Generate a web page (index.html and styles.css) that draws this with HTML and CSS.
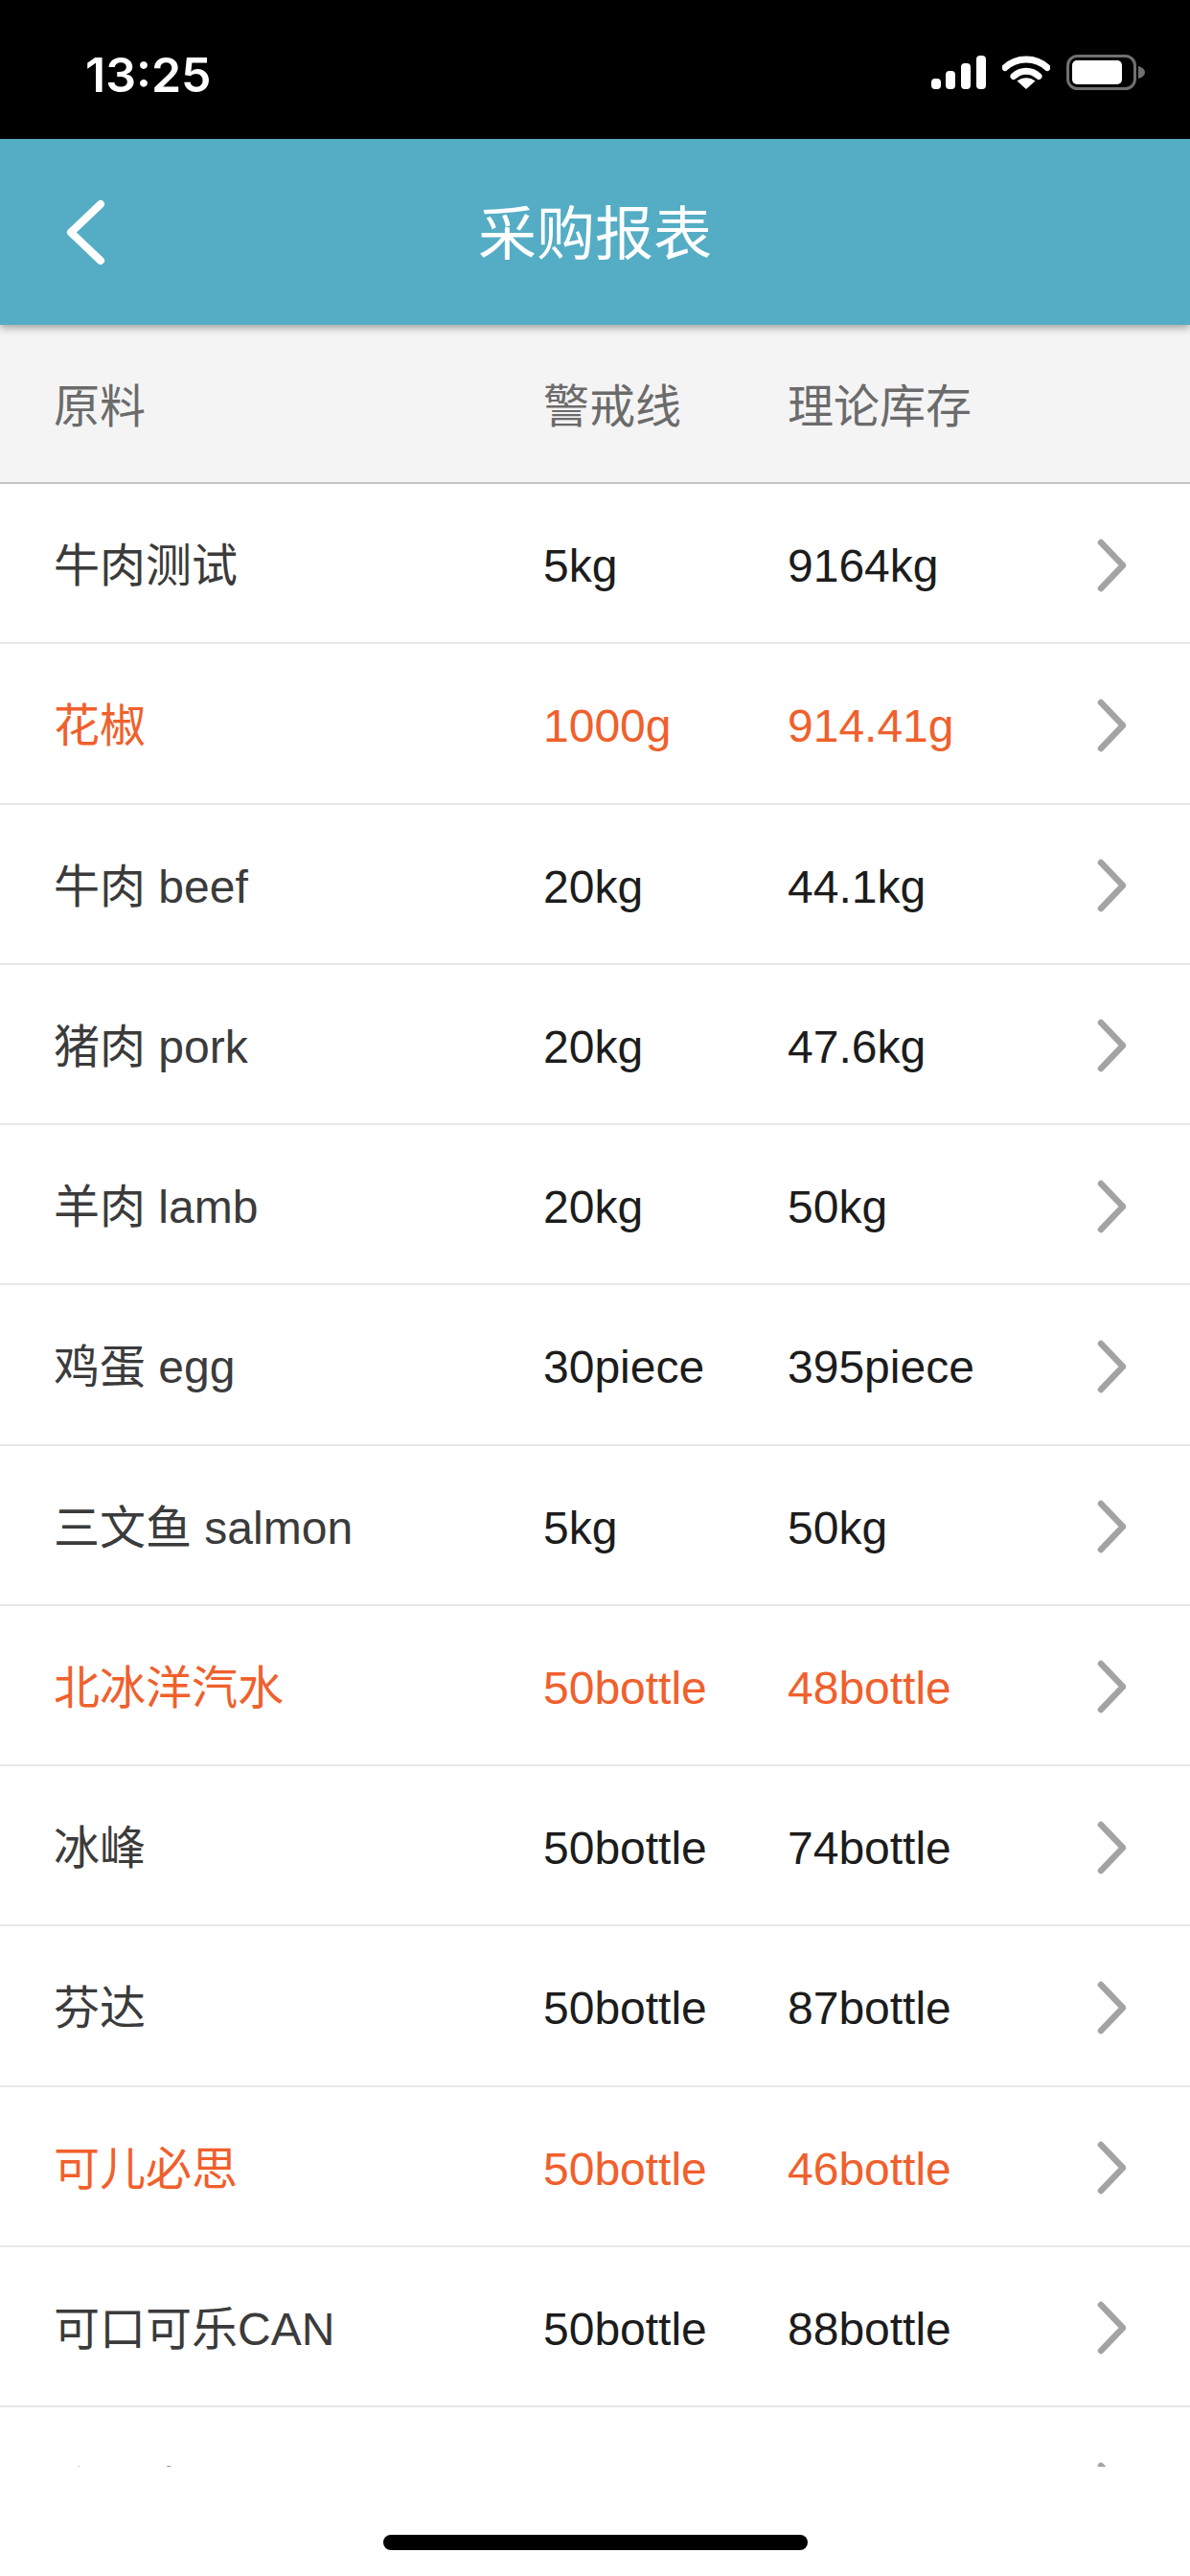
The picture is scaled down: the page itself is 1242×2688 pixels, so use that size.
FILE: index.html
```html
<!DOCTYPE html>
<html lang="zh">
<head>
  <meta charset="UTF-8">
  <title>采购报表</title>
  <link rel="stylesheet" href="styles.css">
</head>
<body>

  <!-- Status bar -->
  <div class="status-bar">
    <span class="time">13:25</span>
    <div class="status-icons">
      <svg class="signal" width="57" height="35" viewBox="0 0 57 35">
        <rect x="0" y="24" width="10" height="11" rx="4" fill="#fff"/>
        <rect x="15" y="16" width="10" height="19" rx="4" fill="#fff"/>
        <rect x="31" y="8" width="10" height="27" rx="4" fill="#fff"/>
        <rect x="47" y="0" width="10" height="35" rx="4" fill="#fff"/>
      </svg>
      <svg class="wifi" width="50" height="36" viewBox="0 0 50 36">
        <path d="M3 13.500C15 2 35 2 47 13.500" fill="none" stroke="#fff" stroke-width="7" stroke-linecap="round"/>
        <path d="M12 22.500C19.500 15.500 30.500 15.500 38 22.500" fill="none" stroke="#fff" stroke-width="7" stroke-linecap="round"/>
        <path d="M25 36L15.500 27.500C21 23 29 23 34.500 27.500Z" fill="#fff"/>
      </svg>
      <svg class="battery" width="82" height="37" viewBox="0 0 82 37">
        <rect x="1.500" y="1.500" width="70" height="34" rx="10" fill="none" stroke="#707070" stroke-width="3"/>
        <rect x="6" y="6" width="52" height="25" rx="5" fill="#fff"/>
        <path d="M75 12C79 13 82 15.500 82 18.500C82 21.500 79 24 75 25Z" fill="#707070"/>
      </svg>
    </div>
  </div>

  <!-- Header -->
  <div class="nav-bar">
    <svg class="back" width="41" height="69" viewBox="0 0 41 69">
      <path d="M36 5L5 34.500L36 64" fill="none" stroke="#fff" stroke-width="8" stroke-linecap="round" stroke-linejoin="round"/>
    </svg>
    <h1>采购报表</h1>
  </div>

  <!-- Table -->
  <div class="table-head">
    <span>原料</span>
    <span>警戒线</span>
    <span>理论库存</span>
  </div>

  <div class="table-body" id="tableBody"></div>

  <div class="home-area">
    <div class="home-bar"></div>
  </div>

  <script>
    const rows = [
      ['牛肉测试', '5kg', '9164kg'],
      ['花椒', '1000g', '914.41g', true],
      ['牛肉 beef', '20kg', '44.1kg'],
      ['猪肉 pork', '20kg', '47.6kg'],
      ['羊肉 lamb', '20kg', '50kg'],
      ['鸡蛋 egg', '30piece', '395piece'],
      ['三文鱼 salmon', '5kg', '50kg'],
      ['北冰洋汽水', '50bottle', '48bottle', true],
      ['冰峰', '50bottle', '74bottle'],
      ['芬达', '50bottle', '87bottle'],
      ['可儿必思', '50bottle', '46bottle', true],
      ['可口可乐CAN', '50bottle', '88bottle'],
      ['脉动水', '50bottle', '90bottle']
    ];

    const chevron = '<svg class="chevron" width="32" height="58" viewBox="0 0 32 58">' +
      '<path d="M6 5L29 29L6 53" fill="none" stroke="#a3a3a3" stroke-width="6.500" stroke-linecap="round" stroke-linejoin="round"/></svg>';

    const tableBody = document.getElementById('tableBody');
    rows.forEach(r => {
      const row = document.createElement('div');
      row.className = r[3] ? 'row low' : 'row';
      row.innerHTML = '<span class="name">' + r[0] + '</span><span class="val">' + r[1] + '</span><span class="val">' + r[2] + '</span>' + chevron;
      tableBody.appendChild(row);
    });
  </script>
</body>
</html>
```

FILE: styles.css
```css
* { margin: 0; padding: 0; box-sizing: border-box; }
html, body {
  width: 1242px;
  height: 2688px;
  overflow: hidden;
}
body {
  font-family: "Liberation Sans", "Noto Sans CJK SC", sans-serif;
  background: #fff;
  display: flex;
  flex-direction: column;
}
.status-bar {
  height: 145px;
  flex: none;
  background: #000;
  color: #fff;
  display: flex;
  justify-content: space-between;
  padding: 57px 47px 0 89px;
}
.time {
  font-family: Inter, sans-serif;
  font-size: 50px;
  font-weight: 600;
  line-height: 38px;
  margin-top: 2px;
}
.status-icons {
  display: flex;
  align-items: flex-start;
  gap: 17px;
}
.signal { margin-top: 1px; }
.nav-bar {
  height: 194px;
  flex: none;
  background: #54adc4;
  box-shadow: 0 3px 8px rgba(0,0,0,0.35);
  display: flex;
  align-items: center;
  justify-content: center;
  position: relative;
  z-index: 1;
}
.nav-bar h1 {
  font-size: 61px;
  font-weight: 400;
  color: #fff;
  padding-bottom: 6px;
}
.back {
  position: absolute;
  left: 69px;
  top: 63px;
}
.table-head, .row {
  display: grid;
  grid-template-columns: 511px 255px 1fr 32px;
  align-items: center;
  padding: 0 67px 0 56px;
  font-size: 48px;
}
.table-head {
  height: 166px;
  flex: none;
  background: #f4f4f4;
  color: #6b6b6b;
  border-bottom: 2px solid #c4c4c4;
  padding-bottom: 3px;
}
.table-body {
  height: 2069px;
  flex: none;
  overflow: hidden;
}
.row {
  height: 167.25px;
  color: #1c1c1c;
  border-bottom: 2px solid #e8e8e8;
}
.row .name {
  color: #3b3b3b;
  padding-bottom: 3px;
}
.row .val { padding-top: 6px; }
.row .chevron { margin-top: 4px; }
.row.low, .row.low .name { color: #f0602c; }
.home-area {
  flex: 1;
  display: flex;
  justify-content: center;
  padding-top: 71px;
}
.home-bar {
  width: 443px;
  height: 16px;
  border-radius: 8px;
  background: #000;
}
```
